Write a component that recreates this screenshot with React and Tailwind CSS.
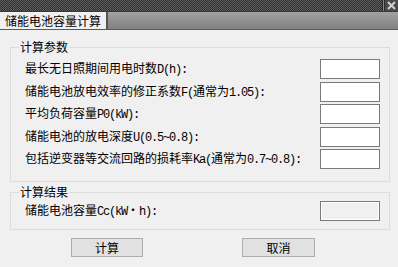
import { useState } from "react";

const FONT = "font-['Noto_Sans_CJK_SC','Noto_Sans',sans-serif]";

const params = [
  "最长无日照期间用电时数D(h):",
  "储能电池放电效率的修正系数F(通常为1.05):",
  "平均负荷容量P0(kW):",
  "储能电池的放电深度U(0.5~0.8):",
  "包括逆变器等交流回路的损耗率Ka(通常为0.7~0.8):",
];

// latin runs get the half-width mono look of the original
const Label = ({ text }) => (
  <span className="text-[12px] leading-none whitespace-nowrap">
    {text.split(/([\x20-\x7E]+)/).map((part, i) =>
      /^[\x20-\x7E]+$/.test(part) ? (
        <span key={i} className="font-['Liberation_Mono',monospace] tracking-[-1.2px]">
          {part}
        </span>
      ) : (
        part
      )
    )}
  </span>
);

const Field = ({ value, onChange, disabled }) => (
  <input
    className={`w-[60px] h-[20px] border border-[#7a7a7a] outline-none px-1 text-[12px] ${
      disabled ? "bg-[#f0f0f0] shadow-[inset_1px_1px_0_#fff,inset_-1px_-1px_0_#fff]" : "bg-white"
    }`}
    value={value}
    onChange={onChange}
    disabled={disabled}
  />
);

const Group = ({ title, className, children }) => (
  <div className={`relative border border-[#dcdcdc] ${className}`}>
    <span className="absolute left-[8px] -top-[9px] bg-[#f0f0f0] px-[1px] leading-[16px] text-[12px] text-black">
      {title}
    </span>
    {children}
  </div>
);

export default function App() {
  const [values, setValues] = useState(["", "", "", "", ""]);

  return (
    <div className={`w-[398px] h-[267px] bg-[#f0f0f0] overflow-hidden text-black ${FONT}`}>
      {/* window strip */}
      <div className="h-[11px] flex">
        <div className="flex-1 bg-[repeating-conic-gradient(#333_0_25%,#5c5c5c_0_50%)] bg-[length:2px_2px]" />
        <div className="w-[1px] bg-[#2a2a2a]" />
        <div className="w-[1px] bg-[#8a8a8a]" />
        <div className="w-[1px] bg-[#2a2a2a]" />
        <div className="w-[13px] bg-[#4a4a4a] flex items-center justify-center">
          <svg width="9" height="9" viewBox="0 0 9 9">
            <path d="M1 1L8 8M8 1L1 8" stroke="#d0d0d0" strokeWidth="2" />
          </svg>
        </div>
      </div>
      {/* tab row */}
      <div className="h-[19px] flex border-t border-[#3a3a3a] border-b border-b-[#5a5a5a] bg-gradient-to-b from-[#a2a2a2] to-[#808080]">
        <div className="w-[108px] bg-[#f0f0f0] border-r-2 border-[#555] flex items-center pl-[5px] text-[12px] leading-none">
          储能电池容量计算
        </div>
      </div>

      <div className="px-[10px] pt-[17px]">
        <Group title="计算参数" className="w-[380px] h-[135px] pt-[11px] pl-[14px] pr-[9px]">
          <div className="flex flex-col gap-[2.5px]">
            {params.map((label, i) => (
              <div key={i} className="flex items-center justify-between h-[20px]">
                <Label text={label} />
                <Field
                  value={values[i]}
                  onChange={(e) => {
                    const next = [...values];
                    next[i] = e.target.value;
                    setValues(next);
                  }}
                />
              </div>
            ))}
          </div>
        </Group>

        <Group title="计算结果" className="w-[380px] h-[38px] mt-[10px] pt-[8px] pl-[14px] pr-[9px]">
          <div className="flex items-center justify-between h-[20px]">
            <Label text="储能电池容量Cc(kW·h):" />
            <Field value="" disabled />
          </div>
        </Group>

        <div className="flex mt-[8px]">
          <button className="ml-[61px] w-[72px] h-[19px] bg-[#e1e1e1] border border-[#adadad] text-[12px] leading-none">
            计算
          </button>
          <button className="ml-[99px] w-[73px] h-[19px] bg-[#e1e1e1] border border-[#adadad] text-[12px] leading-none">
            取消
          </button>
        </div>
      </div>
    </div>
  );
}
